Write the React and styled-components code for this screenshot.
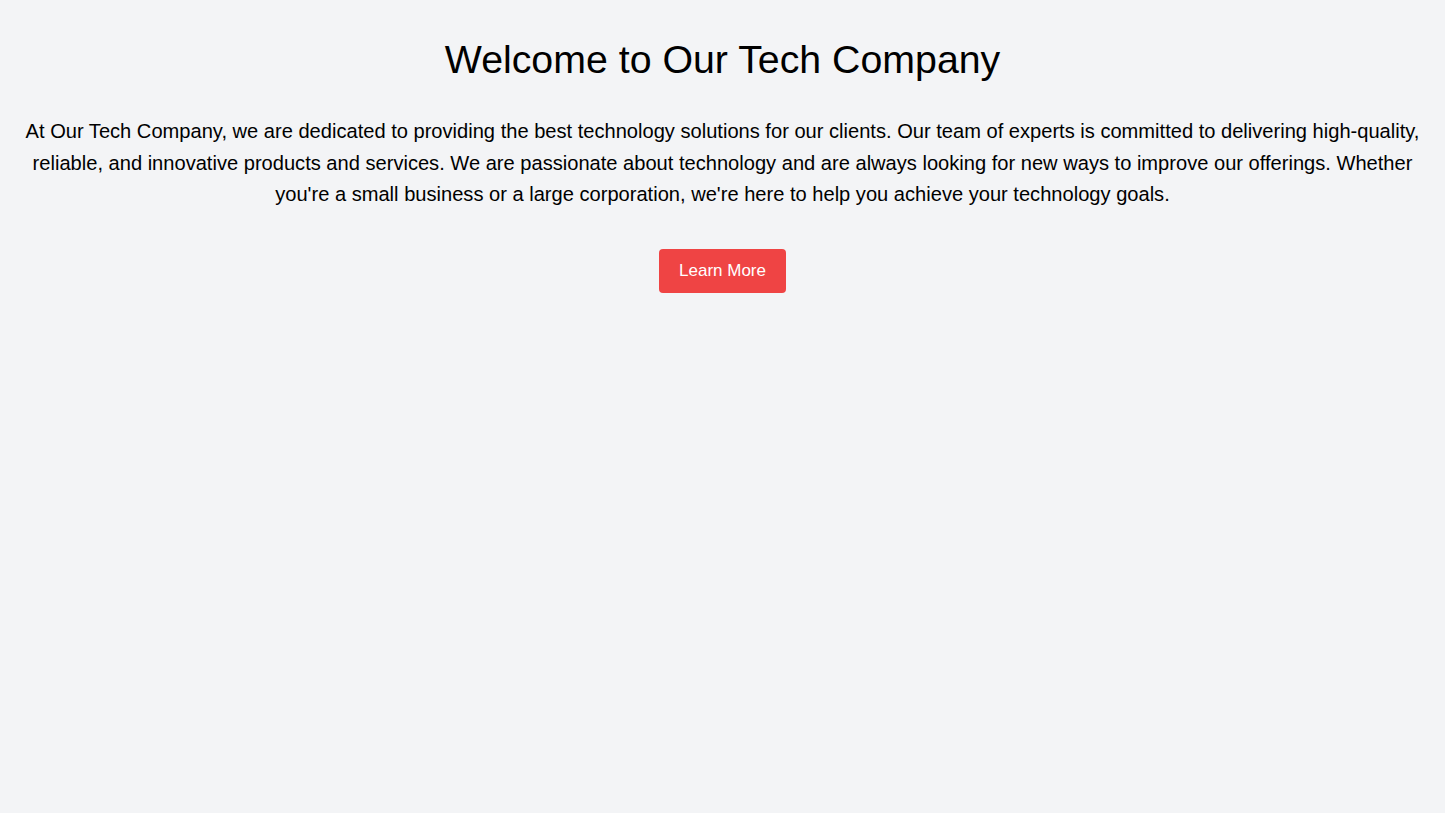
import React from "react"
import styled, { createGlobalStyle } from "styled-components"

const GlobalStyle = createGlobalStyle`
    html, body {
        margin: 0;
        padding: 0;
        background: #f3f4f6;
    }
    body {
        font-family: "Liberation Sans", Arial, Helvetica, sans-serif;
        color: #000;
    }
`

export default function App() {
    return (
        <Page>
            <GlobalStyle />
            <Hero>
                <Title>Welcome to Our Tech Company</Title>
                <Intro>
                    At Our Tech Company, we are dedicated to providing the best technology solutions for our clients. Our team of experts is committed to delivering high-quality, reliable, and innovative products and services. We are passionate about technology and are always looking for new ways to improve our offerings. Whether you're a small business or a large corporation, we're here to help you achieve your technology goals.
                </Intro>
                <Button>Learn More</Button>
            </Hero>
        </Page>
    )
}

const Page = styled.div`
    min-height: 813px;
    background: #f3f4f6;
`
const Hero = styled.section`
    display: flex;
    flex-direction: column;
    align-items: center;
    padding: 37px 16px 32px;
    text-align: center;
`
const Title = styled.h1`
    margin: 0 0 35px;
    font-size: 39.3px;
    line-height: 44px;
    font-weight: 400;
`
const Intro = styled.p`
    margin: 0 0 38px;
    font-size: 20.1px;
    line-height: 31.5px;
`
const Button = styled.button`
    padding: 8px 20px;
    border: none;
    border-radius: 4px;
    background: #ef4444;
    color: #fff;
    font-family: inherit;
    font-size: 17px;
    line-height: 28px;
    cursor: pointer;
`
